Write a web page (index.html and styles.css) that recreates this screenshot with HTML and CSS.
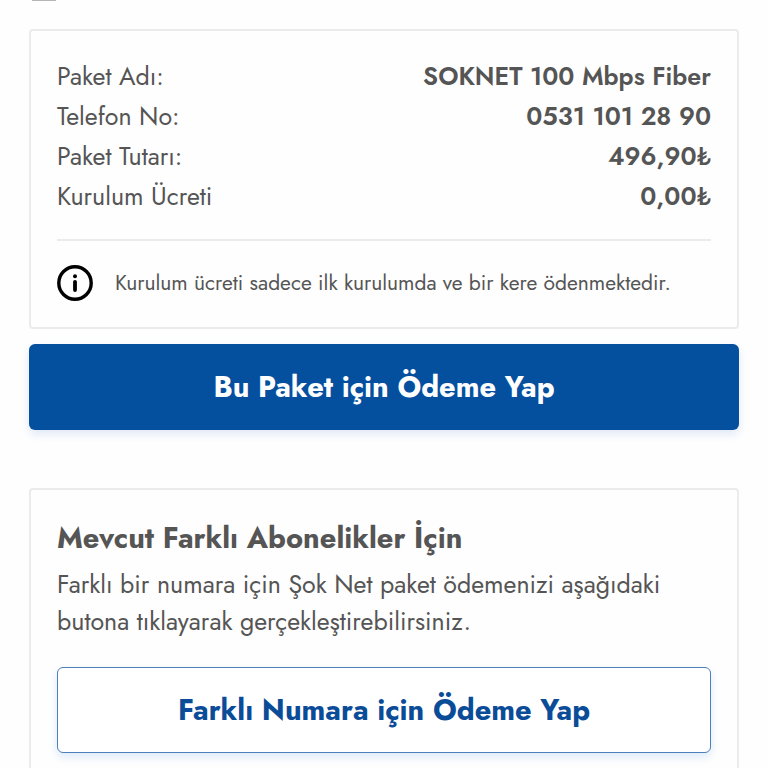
FILE: index.html
```
<!DOCTYPE html>
<html lang="tr">
<head>
    <meta charset="UTF-8">
    <meta name="viewport" content="width=device-width, initial-scale=1.0">
    <title>Paket Ödeme</title>
    <link rel="stylesheet" href="styles.css">
</head>
<body>
    <hr class="top-line">
    <main>
        <section class="card">
            <table class="details">
                <tr>
                    <th scope="row">Paket Adı:</th>
                    <td>SOKNET 100 Mbps Fiber</td>
                </tr>
                <tr>
                    <th scope="row">Telefon No:</th>
                    <td>0531 101 28 90</td>
                </tr>
                <tr>
                    <th scope="row">Paket Tutarı:</th>
                    <td>496,90₺</td>
                </tr>
                <tr>
                    <th scope="row">Kurulum Ücreti</th>
                    <td>0,00₺</td>
                </tr>
            </table>
            <div class="note">
                <svg class="info-icon" viewBox="0 0 36 36" aria-hidden="true">
                    <circle cx="18" cy="18" r="16.2" fill="none" stroke="#000" stroke-width="3.4"/>
                    <circle cx="18" cy="11.2" r="2" fill="#000"/>
                    <path d="M18 16.8v8.2" stroke="#000" stroke-width="3.8" stroke-linecap="round"/>
                </svg>
                <p>Kurulum ücreti sadece ilk kurulumda ve bir kere ödenmektedir.</p>
            </div>
        </section>

        <button type="button" class="btn btn-primary">Bu Paket için Ödeme Yap</button>

        <section class="card other">
            <h2>Mevcut Farklı Abonelikler İçin</h2>
            <p>Farklı bir numara için Şok Net paket ödemenizi aşağıdaki butona tıklayarak gerçekleştirebilirsiniz.</p>
            <button type="button" class="btn btn-outline">Farklı Numara için Ödeme Yap</button>
        </section>
    </main>
</body>
</html>
```

FILE: styles.css
```
* {
    box-sizing: border-box;
}

body {
    margin: 0;
    font-family: Jost, Lato, "Open Sans", sans-serif;
    font-size: 25px;
    background-color: #fefefe;
    color: #555555;
}

.top-line {
    width: 24px;
    height: 1px;
    margin: 0 0 0 32px;
    border: none;
    background-color: #b5b5b5;
}

main {
    padding: 28px 29px;
}

.card {
    padding: 25px 26px;
    border: 2px solid #ebebeb;
    border-radius: 4px;
}

.details {
    width: 100%;
    border-collapse: collapse;
    line-height: 40px;
}

.details th {
    padding: 0;
    font-weight: 400;
    text-align: left;
}

.details td {
    padding: 0;
    font-weight: 600;
    text-align: right;
}

.note {
    display: flex;
    align-items: center;
    gap: 22px;
    margin-top: 23px;
    padding: 24px 0 1px;
    border-top: 2px solid #ebebeb;
    font-size: 21px;
}

.note p {
    margin: 0;
}

.info-icon {
    flex: none;
    width: 36px;
    height: 36px;
}

.btn {
    display: block;
    width: 100%;
    height: 86px;
    border-radius: 6px;
    font-family: inherit;
    font-size: 29px;
    font-weight: 700;
    cursor: pointer;
}

.btn-primary {
    margin: 15px 0 58px;
    border: none;
    background-color: #04509f;
    color: #ffffff;
    box-shadow: 0 4px 10px #dfe7f6;
}

.btn-outline {
    border: 1px solid #4f7fb8;
    background-color: #ffffff;
    color: #0a4c98;
    box-shadow: 0 4px 10px #dceaf8;
}

.other h2 {
    margin: 0 0 5px;
    font-size: 29px;
    font-weight: 700;
    line-height: 46px;
}

.other p {
    margin: 0 0 27px;
    line-height: 37px;
}
```
